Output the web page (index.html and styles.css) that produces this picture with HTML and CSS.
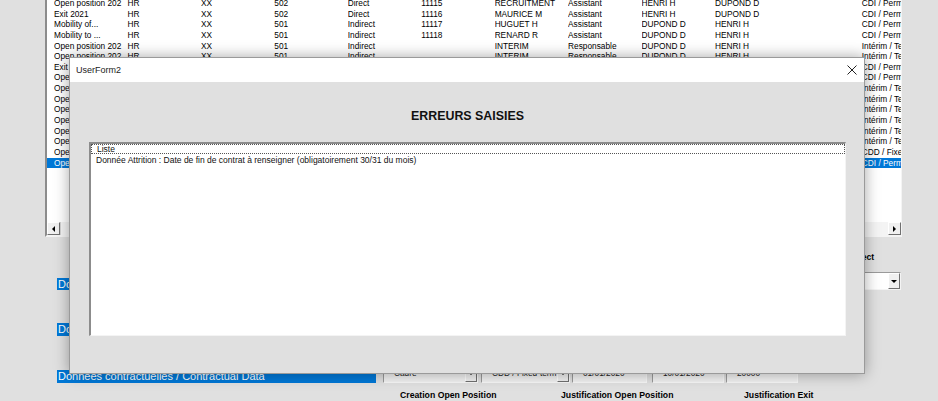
FILE: index.html
```html
<!DOCTYPE html>
<html lang="fr">
<head>
    <meta charset="UTF-8">
    <title>UserForm2</title>
    <link rel="stylesheet" href="styles.css">
</head>
<body>
    <div class="sheet">
        <div class="lb">
            <div class="lb-rows">
                <div class="lb-row"><span>Open position 202</span><span>HR</span><span>XX</span><span>502</span><span>Direct</span><span>11115</span><span>RECRUITMENT</span><span>Assistant</span><span>HENRI H</span><span>DUPOND D</span><span></span><span>CDI / Permanent</span></div>
                <div class="lb-row"><span>Exit 2021</span><span>HR</span><span>XX</span><span>502</span><span>Direct</span><span>11116</span><span>MAURICE M</span><span>Assistant</span><span>HENRI H</span><span>DUPOND D</span><span></span><span>CDI / Permanent</span></div>
                <div class="lb-row"><span>Mobility of...</span><span>HR</span><span>XX</span><span>501</span><span>Indirect</span><span>11117</span><span>HUGUET H</span><span>Assistant</span><span>DUPOND D</span><span>HENRI H</span><span></span><span>CDI / Permanent</span></div>
                <div class="lb-row"><span>Mobility to ...</span><span>HR</span><span>XX</span><span>501</span><span>Indirect</span><span>11118</span><span>RENARD R</span><span>Assistant</span><span>DUPOND D</span><span>HENRI H</span><span></span><span>CDI / Permanent</span></div>
                <div class="lb-row"><span>Open position 202</span><span>HR</span><span>XX</span><span>501</span><span>Indirect</span><span></span><span>INTERIM</span><span>Responsable</span><span>DUPOND D</span><span>HENRI H</span><span></span><span>Intérim / Temporary</span></div>
                <div class="lb-row"><span>Open position 202</span><span>HR</span><span>XX</span><span>501</span><span>Indirect</span><span></span><span>INTERIM</span><span>Responsable</span><span>DUPOND D</span><span>HENRI H</span><span></span><span>Intérim / Temporary</span></div>
                <div class="lb-row"><span>Exit 2021</span><span>HR</span><span>XX</span><span>502</span><span>Direct</span><span>11119</span><span>LEROY L</span><span>Assistant</span><span>HENRI H</span><span>DUPOND D</span><span></span><span>CDI / Permanent</span></div>
                <div class="lb-row"><span>Open position 202</span><span>HR</span><span>XX</span><span>502</span><span>Direct</span><span></span><span>RECRUITMENT</span><span>Assistant</span><span>HENRI H</span><span>DUPOND D</span><span></span><span>CDI / Permanent</span></div>
                <div class="lb-row"><span>Open position 202</span><span>HR</span><span>XX</span><span>501</span><span>Indirect</span><span></span><span>INTERIM</span><span>Responsable</span><span>DUPOND D</span><span>HENRI H</span><span></span><span>Intérim / Temporary</span></div>
                <div class="lb-row"><span>Open position 202</span><span>HR</span><span>XX</span><span>501</span><span>Indirect</span><span></span><span>INTERIM</span><span>Responsable</span><span>DUPOND D</span><span>HENRI H</span><span></span><span>Intérim / Temporary</span></div>
                <div class="lb-row"><span>Open position 202</span><span>HR</span><span>XX</span><span>501</span><span>Indirect</span><span></span><span>INTERIM</span><span>Responsable</span><span>DUPOND D</span><span>HENRI H</span><span></span><span>Intérim / Temporary</span></div>
                <div class="lb-row"><span>Open position 202</span><span>HR</span><span>XX</span><span>501</span><span>Indirect</span><span></span><span>INTERIM</span><span>Responsable</span><span>DUPOND D</span><span>HENRI H</span><span></span><span>Intérim / Temporary</span></div>
                <div class="lb-row"><span>Open position 202</span><span>HR</span><span>XX</span><span>501</span><span>Indirect</span><span></span><span>INTERIM</span><span>Responsable</span><span>DUPOND D</span><span>HENRI H</span><span></span><span>Intérim / Temporary</span></div>
                <div class="lb-row"><span>Open position 202</span><span>HR</span><span>XX</span><span>501</span><span>Indirect</span><span></span><span>INTERIM</span><span>Responsable</span><span>DUPOND D</span><span>HENRI H</span><span></span><span>Intérim / Temporary</span></div>
                <div class="lb-row"><span>Open position 202</span><span>HR</span><span>XX</span><span>502</span><span>Direct</span><span></span><span>RECRUITMENT</span><span>Assistant</span><span>HENRI H</span><span>DUPOND D</span><span></span><span>CDD / Fixed-term</span></div>
                <div class="lb-row selected"><span>Open position 202</span><span>HR</span><span>XX</span><span>502</span><span>Direct</span><span></span><span>RECRUITMENT</span><span>Assistant</span><span>HENRI H</span><span>DUPOND D</span><span></span><span>CDI / Permanent</span></div>
            </div>
            <div class="hscroll">
                <span class="sb-btn"><span class="tri-left"></span></span>
                <span class="sb-thumb"></span>
                <span class="sb-btn"><span class="tri-right"></span></span>
            </div>
        </div>

        <div class="block block-a">
            <div class="bar">Données organisationnelles / Organisational Data</div>
            <div class="side">
                <div class="side-label">Direct / Indirect</div>
                <div class="combo">
                    <span class="combo-value">Direct</span>
                    <span class="combo-btn"><span class="tri-down"></span></span>
                </div>
            </div>
        </div>

        <div class="block block-b">
            <div class="bar">Données du poste / Position Data</div>
        </div>

        <div class="block block-c">
            <div class="bar">Données contractuelles / Contractual Data</div>
            <div class="field f1">Cadre<span class="combo-btn"><span class="tri-down"></span></span></div>
            <div class="field f2">CDD / Fixed-term<span class="combo-btn"><span class="tri-down"></span></span></div>
            <div class="field f3">01/01/2020</div>
            <div class="field f4">10/01/2020</div>
            <div class="field f5">20000</div>
        </div>

        <div class="captions">
            <span>Creation Open Position</span>
            <span>Justification Open Position</span>
            <span>Justification Exit</span>
        </div>
    </div>

    <div class="dialog">
        <div class="titlebar">
            <span class="title">UserForm2</span>
            <svg class="close" width="10" height="10" viewBox="0 0 10 10">
                <path d="M0.5 0.5 L9.5 9.5 M9.5 0.5 L0.5 9.5" stroke="#222" stroke-width="1" fill="none"/>
            </svg>
        </div>
        <div class="dialog-body">
            <h1 class="heading">ERREURS SAISIES</h1>
            <div class="err-list">
                <div class="err-head">Liste</div>
                <div class="err-item">Donnée Attrition : Date de fin de contrat à renseigner (obligatoirement 30/31 du mois)</div>
            </div>
        </div>
    </div>
</body>
</html>
```

FILE: styles.css
```css
* {
    margin: 0;
    padding: 0;
    box-sizing: border-box;
}

body {
    background: #e0e0e0;
    font-family: 'Liberation Sans', Arial, sans-serif;
    width: 938px;
    height: 401px;
    overflow: hidden;
    color: #000;
}

/* background form */

.sheet {
    width: 938px;
}

.lb {
    margin: -4px 0 0 45px;
    width: 857px;
    background: #fff;
    border-top: 2px solid #8c8c8c;
    border-left: 2px solid #8c8c8c;
    border-right: 1px solid #f4f4f4;
    border-bottom: 2px solid #f4f4f4;
    overflow: hidden;
}

.lb-rows {
    height: 224px;
    overflow: hidden;
}

.lb-row {
    display: grid;
    grid-template-columns: repeat(12, 73.45px);
    height: 10.65px;
    font-size: 8.3px;
    line-height: 10.65px;
    padding-left: 7px;
    white-space: nowrap;
}

.lb-row span {
    overflow: hidden;
    padding-right: 3px;
}

.lb-row span:last-child {
    overflow: visible;
}

.lb-row.selected {
    background: #0078d7;
    color: #fff;
}

.hscroll {
    display: flex;
    height: 13px;
    background: #f4f4f4;
}

.sb-btn {
    width: 13px;
    height: 13px;
    background: #f0f0f0;
    border-top: 1px solid #fff;
    border-left: 1px solid #fff;
    border-right: 1px solid #707070;
    border-bottom: 1px solid #707070;
    display: flex;
    align-items: center;
    justify-content: center;
}

.sb-thumb {
    flex: 1;
    border-left: 1px solid #d0d0d0;
}

.tri-left {
    border-top: 3px solid transparent;
    border-bottom: 3px solid transparent;
    border-right: 3px solid #000;
}

.tri-right {
    border-top: 3px solid transparent;
    border-bottom: 3px solid transparent;
    border-left: 3px solid #000;
}

.tri-down {
    border-left: 3px solid transparent;
    border-right: 3px solid transparent;
    border-top: 3px solid #000;
}

.block {
    display: flex;
    padding-left: 57px;
}

.bar {
    width: 319px;
    height: 13px;
    background: #0078d7;
    color: #fff;
    font-size: 11px;
    line-height: 13px;
    padding-left: 1px;
    white-space: nowrap;
    overflow: hidden;
}

.block-a .bar {
    align-self: flex-end;
    height: 12px;
    line-height: 12px;
}

.side {
    margin: 14px 37px 0 auto;
    width: 90px;
}

.side-label {
    font-size: 8.7px;
    font-weight: bold;
    line-height: 12px;
    height: 12px;
    white-space: nowrap;
}

.combo {
    display: flex;
    margin-top: 9px;
    height: 18px;
    background: #fff;
    border-top: 1px solid #9a9a9a;
    border-left: 1px solid #9a9a9a;
    border-right: 1px solid #f4f4f4;
    border-bottom: 1px solid #f4f4f4;
    font-size: 8.3px;
    line-height: 16px;
}

.combo-value {
    flex: 1;
    padding-left: 4px;
}

.combo-btn {
    width: 12px;
    background: #f0f0f0;
    border-top: 1px solid #fff;
    border-left: 1px solid #fff;
    border-right: 1px solid #707070;
    border-bottom: 1px solid #707070;
    display: flex;
    align-items: center;
    justify-content: center;
}

.block-b {
    margin-top: 33px;
}

.block-c {
    margin-top: 27px;
    align-items: flex-end;
}

.field {
    display: flex;
    justify-content: space-between;
    height: 20px;
    background: #f2f2f2;
    border-top: 1px solid #9a9a9a;
    border-left: 1px solid #9a9a9a;
    border-right: 1px solid #f8f8f8;
    border-bottom: 1px solid #f8f8f8;
    font-size: 8.3px;
    line-height: 18px;
    padding-left: 10px;
    color: #222;
}

.f1 { margin-left: 7px; width: 95px; }
.f2 { margin-left: 3px; width: 89px; }
.f3 { margin-left: 2px; width: 75px; }
.f4 { margin-left: 5px; width: 72px; }
.f5 { margin-left: 2px; width: 72px; }

.captions {
    display: grid;
    grid-template-columns: 161px 183px auto;
    padding-left: 400px;
    margin-top: 6px;
    font-size: 8.7px;
    font-weight: bold;
    line-height: 12px;
    white-space: nowrap;
}

/* error dialog */

.dialog {
    position: absolute;
    left: 69px;
    top: 57px;
    width: 796px;
    height: 317px;
    border: 1px solid #9a9a9a;
    background: #e0e0e0;
    box-shadow: 0 0 14px rgba(0, 0, 0, 0.35);
    display: flex;
    flex-direction: column;
}

.titlebar {
    height: 24px;
    background: #fff;
    display: flex;
    align-items: center;
    justify-content: space-between;
    padding: 0 7px 1px 6px;
}

.title {
    font-size: 9px;
    color: #222;
}

.close {
    display: block;
}

.dialog-body {
    flex: 1;
    padding: 0 18px 0 19px;
}

.heading {
    margin-top: 26px;
    height: 16px;
    text-align: center;
    font-size: 12.4px;
    line-height: 16px;
    font-weight: bold;
    color: #111;
}

.err-list {
    margin-top: 18px;
    height: 194px;
    background: #fff;
    border-top: 2px solid #8c8c8c;
    border-left: 2px solid #8c8c8c;
    border-right: 1px solid #f4f4f4;
    border-bottom: 1px solid #f4f4f4;
    font-size: 8.5px;
    color: #111;
}

.err-head {
    height: 10px;
    line-height: 9px;
    border: 1px dotted #555;
    padding-left: 5px;
}

.err-item {
    margin-top: 1px;
    padding-left: 5px;
    line-height: 11px;
}
```
